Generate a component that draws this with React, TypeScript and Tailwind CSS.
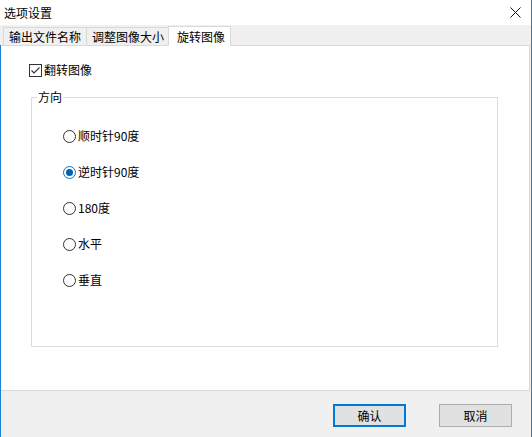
import React from "react";

const font = { fontFamily: '"Noto Sans CJK SC", "Microsoft YaHei", sans-serif' };

function Radio({ label, checked }: { label: string; checked?: boolean }) {
  return (
    <div className="flex items-center h-[14px]">
      {checked ? (
        <span className="w-[13px] h-[13px] rounded-full border border-[#0078d7] flex items-center justify-center bg-white">
          <span className="w-[7px] h-[7px] rounded-full bg-[#0063b1]" />
        </span>
      ) : (
        <span className="w-[13px] h-[13px] rounded-full border border-[#333333] bg-white" />
      )}
      <span className="ml-[2px] text-[12px] leading-[14px] text-black">{label}</span>
    </div>
  );
}

export default function App() {
  return (
    <div
      className="w-[532px] h-[437px] bg-[#f0f0f0] flex flex-col border-r border-[#1883d7] select-none"
      style={font}
    >
      {/* title bar */}
      <div className="h-[25px] bg-white flex items-center justify-between pl-[4px] pr-[9px]">
        <span className="text-[12px] leading-[14px] text-black">选项设置</span>
        <svg width="11" height="11" viewBox="0 0 11 11" className="mr-[1px]">
          <path d="M0.5 0.5 L10.5 10.5 M10.5 0.5 L0.5 10.5" stroke="#111" strokeWidth="1" />
        </svg>
      </div>

      {/* tab strip */}
      <div className="h-[20px] flex items-end pl-[3px] pr-[2px]">
        <div className="h-[18px] w-[83px] border border-b-0 border-r-0 border-[#d9d9d9] bg-[#f0f0f0] pl-[5px] text-[12px] leading-[17px] text-black">
          输出文件名称
        </div>
        <div className="h-[18px] w-[83px] border border-b-0 border-[#d9d9d9] bg-[#f0f0f0] pl-[5px] text-[12px] leading-[17px] text-black">
          调整图像大小
        </div>
        <div className="h-[20px] w-[63px] -ml-[1px] border border-b-0 border-[#d9d9d9] bg-white pl-[8px] text-[12px] leading-[20px] text-black relative z-10 -mb-[1px]">
          旋转图像
        </div>
      </div>

      {/* body */}
      <div className="flex-1 flex flex-col border-l border-[#1883d7]">
        <div className="h-[346px] mr-[1px] bg-white border border-l-0 border-[#d9d9d9] flex flex-col">
          <div className="flex items-center pl-[28px] pt-[17px]">
            <span className="w-[13px] h-[13px] border border-[#333333] bg-white flex items-center justify-center">
              <svg width="11" height="11" viewBox="0 0 11 11">
                <path d="M1.5 5.5 L4 8 L9.5 2.5" stroke="#333" strokeWidth="1.1" fill="none" />
              </svg>
            </span>
            <span className="ml-[2px] text-[12px] leading-[14px] text-black">翻转图像</span>
          </div>

          <div className="ml-[30px] mt-[13px] w-[467px] h-[257px] relative">
            <div className="absolute left-0 right-0 top-[7px] bottom-0 border border-[#dcdcdc]" />
            <span className="absolute left-[6px] top-0 bg-white px-[1px] text-[12px] leading-[14px] text-black">
              方向
            </span>
            <div className="relative flex flex-col gap-[22px] pl-[32px] pt-[39px]">
              <Radio label="顺时针90度" />
              <Radio label="逆时针90度" checked />
              <Radio label="180度" />
              <Radio label="水平" />
              <Radio label="垂直" />
            </div>
          </div>
        </div>

        {/* footer */}
        <div className="flex-1 flex justify-end items-start pt-[13px] pr-[19px] gap-[33px]">
          <button className="w-[73px] h-[23px] bg-[#e1e1e1] border-2 border-[#0078d7] text-[12px] leading-[14px] text-black">
            确认
          </button>
          <button className="w-[73px] h-[23px] bg-[#e1e1e1] border border-[#adadad] text-[12px] leading-[14px] text-black">
            取消
          </button>
        </div>
      </div>
    </div>
  );
}
